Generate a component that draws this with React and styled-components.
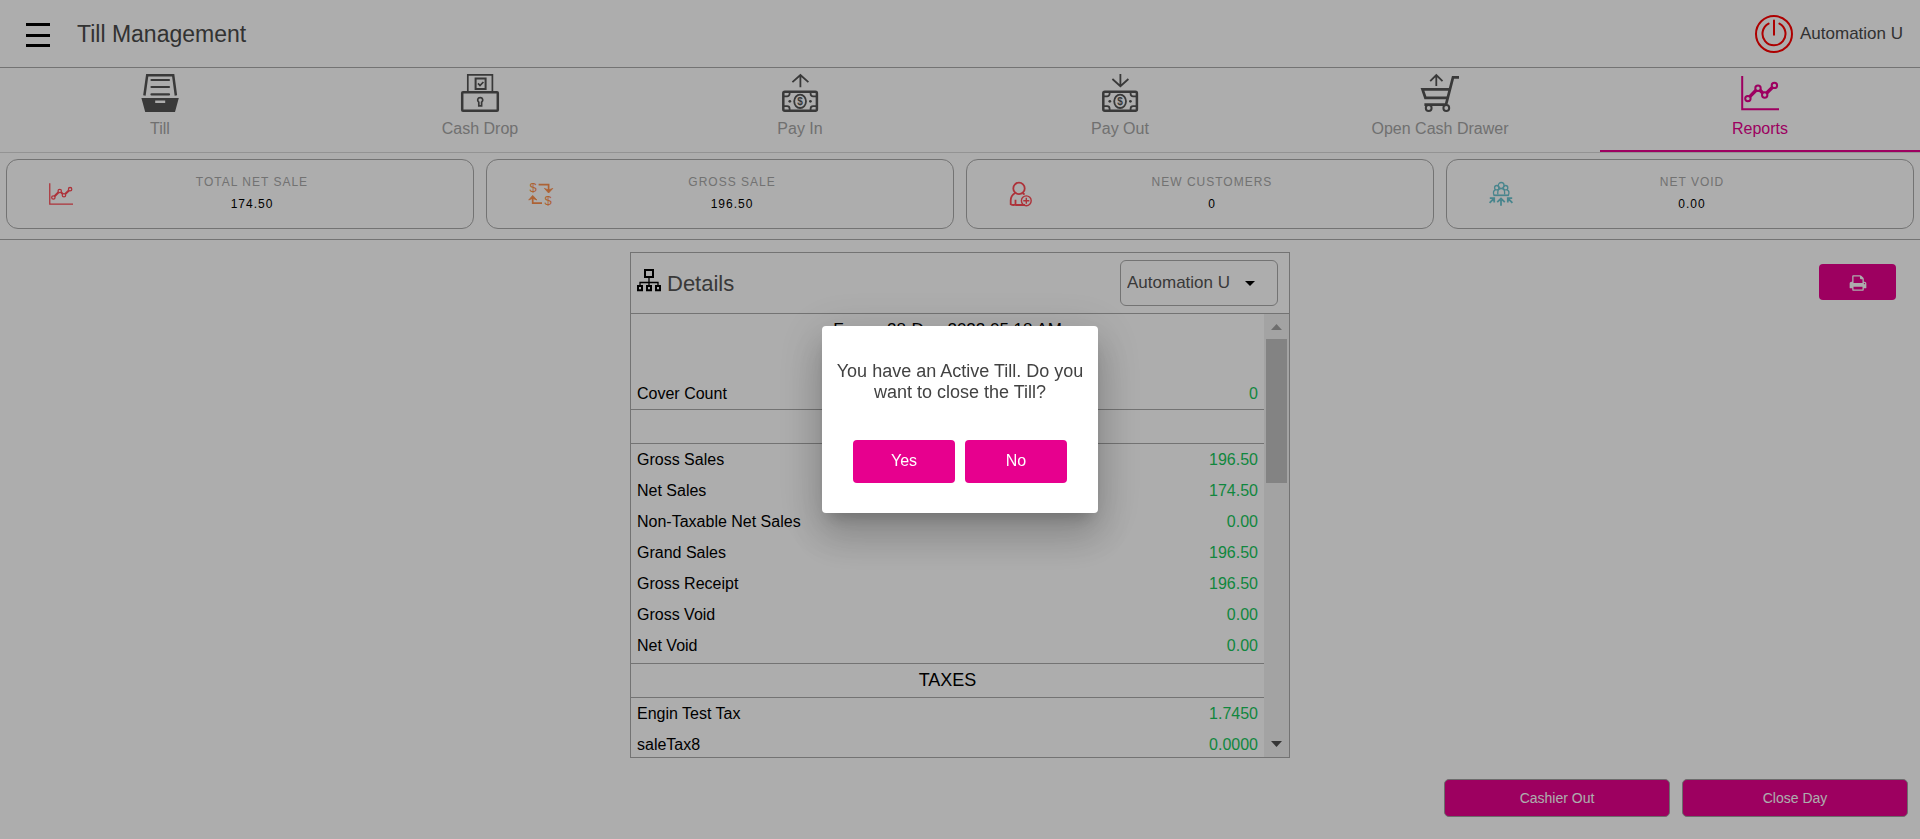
import React from "react";
import styled, { createGlobalStyle } from "styled-components";

const pink = "#e7008e";
const line = "#aaaaaa";

const GlobalStyle = createGlobalStyle`
  *, *::before, *::after { box-sizing: border-box; }
  body { margin: 0; background: #fff; color: #000; font-family: Arial, "Liberation Sans", sans-serif; font-size: 16px; }
  button, select { font-family: inherit; }
  h1, h2, h3, p, dl, dd, dt { margin: 0; font-weight: 400; }
`;

const Page = styled.div`
  display: flex;
  flex-direction: column;
  height: 100vh;
  min-height: 640px;
`;

const Header = styled.header`
  display: flex;
  align-items: center;
  height: 68px;
  padding: 0 17px 0 26px;
  border-bottom: 1px solid ${line};
`;

const MenuButton = styled.button`
  display: flex;
  padding: 0;
  margin-top: 2px;
  margin-right: 27px;
  border: 0;
  background: none;
`;

const Title = styled.h1`
  flex: 1;
  font-size: 23px;
  line-height: 28px;
  color: #4a4a4a;
`;

const UserButton = styled.button`
  display: flex;
  align-items: center;
  gap: 7px;
  padding: 0;
  border: 0;
  background: none;
  font-size: 17px;
  color: #4a4a4a;
`;

const Tabs = styled.nav`
  display: flex;
  border-bottom: 1px solid #d9d9d9;
`;

const Tab = styled.a`
  flex: 1;
  display: flex;
  flex-direction: column;
  align-items: center;
  gap: 7px;
  height: 84px;
  padding-top: 6px;
  text-decoration: none;
  line-height: 20px;
  color: ${(p) => (p.$active ? pink : "#a6a6a6")};
  border-bottom: 2px solid ${(p) => (p.$active ? pink : "transparent")};
  svg { color: ${(p) => (p.$active ? pink : "#555555")}; }
`;

const Cards = styled.section`
  display: grid;
  grid-template-columns: repeat(4, 1fr);
  gap: 12px;
  padding: 6px 6px 10px;
  border-bottom: 1px solid ${line};
`;

const Card = styled.article`
  display: grid;
  grid-template-columns: 108px 1fr 84px;
  align-items: center;
  height: 70px;
  border: 1px solid ${line};
  border-radius: 12px;
  text-align: center;
  font-size: 12px;
  line-height: 22px;
  letter-spacing: 1px;
`;

const CardText = styled.div`
  padding-bottom: 2px;
`;

const CardIcon = styled.span`
  display: flex;
  justify-content: center;
  letter-spacing: 0;
  color: ${(p) => p.$color};
`;

const CardLabel = styled.h2`
  font-size: 12px;
  font-weight: 500;
  color: #a8a8a8;
`;

const Main = styled.main`
  flex: 1;
  min-height: 0;
  display: grid;
  grid-template-columns: 1fr 660px 1fr;
  padding-top: 12px;
`;

const Panel = styled.section`
  grid-column: 2;
  display: flex;
  flex-direction: column;
  min-height: 0;
  border: 1px solid ${line};
`;

const PanelHeader = styled.div`
  display: flex;
  align-items: center;
  gap: 6px;
  height: 61px;
  padding: 0 11px 0 6px;
  border-bottom: 1px solid ${line};
`;

const PanelTitle = styled.h2`
  flex: 1;
  display: flex;
  align-items: center;
  gap: 6px;
  padding-top: 2px;
  font-size: 22px;
  line-height: 26px;
  color: #555555;
  svg { color: #000; margin-bottom: 8px; }
`;

const SelectBox = styled.label`
  position: relative;
  display: block;
  svg { position: absolute; right: 23px; top: 21px; pointer-events: none; }
`;

const Select = styled.select`
  appearance: none;
  width: 158px;
  height: 46px;
  padding: 0 6px 2px;
  border: 1px solid ${line};
  border-radius: 6px;
  background: none;
  font-size: 17px;
  color: #555555;
`;

const Scroller = styled.div`
  flex: 1;
  display: flex;
  min-height: 0;
`;

const Report = styled.div`
  flex: 1;
  overflow: hidden;
`;

const Period = styled.p`
  height: 64px;
  font-size: 17px;
  line-height: 32px;
  text-align: center;
`;

const Rows = styled.dl`
  padding-bottom: ${(p) => (p.$last ? 0 : 2)}px;
`;

const Row = styled.div`
  display: flex;
  justify-content: space-between;
  padding: 0 6px;
  line-height: 31px;
`;

const Amount = styled.dd`
  color: #18c75c;
`;

const Heading = styled.h3`
  height: 35px;
  border: solid ${line};
  border-width: 1px 0;
  font-size: 18px;
  line-height: 33px;
  text-align: center;
`;

const Track = styled.div`
  display: flex;
  flex-direction: column;
  align-items: center;
  justify-content: space-between;
  width: 25px;
  padding: 10px 0;
  background: #f1f1f1;
`;

const Thumb = styled.div`
  width: 21px;
  height: 144px;
  margin-top: 9px;
  margin-bottom: auto;
  background: #c1c1c1;
`;

const PrintButton = styled.button`
  justify-self: end;
  display: flex;
  align-items: center;
  justify-content: center;
  width: 77px;
  height: 36px;
  margin: 12px 24px 0 0;
  padding: 2px 0 0;
  border: 0;
  border-radius: 4px;
  background: ${pink};
  color: #fff;
`;

const Footer = styled.footer`
  display: flex;
  justify-content: flex-end;
  gap: 12px;
  padding: 21px 12px 22px;
`;

const ActionButton = styled.button`
  width: 226px;
  height: 38px;
  border: 1px solid #a0a0a0;
  border-radius: 5px;
  background: ${pink};
  font-size: 14px;
  font-weight: 500;
  color: #fff;
`;

const Backdrop = styled.div`
  position: fixed;
  inset: 0;
  display: flex;
  align-items: center;
  justify-content: center;
  background: rgba(0, 0, 0, 0.32);
`;

const Dialog = styled.div`
  width: 276px;
  padding: 35px 12px 30px;
  border-radius: 4px;
  background: #fff;
  text-align: center;
  box-shadow: 0 11px 15px -7px rgba(0, 0, 0, 0.2), 0 24px 38px 3px rgba(0, 0, 0, 0.14), 0 9px 46px 8px rgba(0, 0, 0, 0.12);
`;

const Message = styled.p`
  font-size: 18px;
  line-height: 21px;
  color: #424242;
`;

const DialogActions = styled.div`
  display: flex;
  justify-content: center;
  gap: 10px;
  padding-top: 37px;
`;

const DialogButton = styled.button`
  width: 102px;
  height: 43px;
  padding: 0 0 2px;
  border: 0;
  border-radius: 4px;
  background: ${pink};
  font-size: 16px;
  font-weight: 500;
  color: #fff;
`;

const Drawing = styled.svg`
  flex: none;
  overflow: visible;
`;

const Svg = ({ size = 38, box = size, width = 2, children }) => (
  <Drawing width={size} height={size} viewBox={`0 0 ${box} ${box}`} fill="none" stroke="currentColor" strokeWidth={width} aria-hidden="true">
    {children}
  </Drawing>
);

const TillIcon = () => (
  <Svg width={2.5}>
    <path d="M3.4 21.5 6.2 1.3h26l2.7 20.2" />
    <path d="M10.5 6h17.5M10.5 13h17.5M10.5 20.4h17.5" strokeWidth="2.2" strokeLinecap="round" />
    <path fillRule="evenodd" fill="currentColor" stroke="none" d="M.4 24h37.4l-3.8 14H4.2zM14.2 26.6v2.4h10v-2.4z" />
  </Svg>
);

const DropIcon = () => (
  <Svg>
    <path d="M6.8 18V.9h24.6V18" strokeWidth="1.7" />
    <path d="M14.6 4.6h10v10.5h-10z" strokeWidth="2" />
    <path d="m17 9.4 2 2.2 3.4-3.6" strokeWidth="1.7" />
    <rect x="1.2" y="18.3" width="35.6" height="18.5" rx=".8" strokeWidth="2.5" />
    <path d="M19.2 23.6a2.5 2.5 0 0 1 1.4 4.6v3.6h-2.8v-3.6a2.5 2.5 0 0 1 1.4-4.6z" strokeWidth="1.7" />
  </Svg>
);

const Bill = () => (
  <>
    <rect x="2.3" y="17.8" width="33.6" height="18.9" rx="1.5" strokeWidth="2.5" />
    <path d="M8.6 18v1.8a2.5 2.5 0 0 1-2.5 2.5H3M29.6 18v1.8a2.5 2.5 0 0 0 2.5 2.5H36M8.6 36.5v-1.8a2.5 2.5 0 0 0-2.5-2.5H3M29.6 36.5v-1.8a2.5 2.5 0 0 1 2.5-2.5H36" strokeWidth="1.8" />
    <ellipse cx="19.1" cy="27.3" rx="5.9" ry="6.7" strokeWidth="1.8" />
    <circle cx="8.8" cy="27.3" r="1.4" fill="currentColor" stroke="none" />
    <circle cx="29.4" cy="27.3" r="1.4" fill="currentColor" stroke="none" />
    <text x="19.1" y="31" fontSize="10" fontWeight="700" textAnchor="middle" fill="currentColor" stroke="none">$</text>
  </>
);

const PayInIcon = () => (
  <Svg>
    <path d="M11.4 8.2 19.4 1l8 7.2M19.4 1v12.2" strokeWidth="1.8" />
    <Bill />
  </Svg>
);

const PayOutIcon = () => (
  <Svg>
    <path d="m11.4 5 8 7.2 8-7.2M19.4 12.2V0" strokeWidth="1.8" />
    <Bill />
  </Svg>
);

const CartIcon = () => (
  <Svg width={2.7}>
    <path d="M38 3.4h-6l-7 27.2H3.4" />
    <path d="M30 15.4H1.5l2.9 8.4h22" />
    <circle cx="7.7" cy="34" r="2.9" strokeWidth="2" />
    <circle cx="25.3" cy="34" r="2.9" strokeWidth="2" />
    <path d="M9.2 7.2 15.3 1l6.2 6.2M15.3 1v11" strokeWidth="1.8" />
  </Svg>
);

const ChartIcon = ({ size, width = 2 }) => (
  <Svg size={size} box={38} width={width}>
    <path d="M1.2 2v33.2H38" />
    <path d="M8.8 22.6l6.3-6.4M18.8 16l3 3.2M25.7 19l5.8-5.7" strokeWidth={3.4} />
    <circle cx="6.9" cy="24.6" r="2.7" />
    <circle cx="17" cy="14.2" r="2.7" />
    <circle cx="23.7" cy="21" r="2.7" />
    <circle cx="33.4" cy="11.4" r="2.7" />
  </Svg>
);

const ExchangeIcon = () => (
  <Svg size={24} width={1.7}>
    <text x="4" y="10" fontSize="13" textAnchor="middle" fill="currentColor" stroke="none">$</text>
    <text x="19" y="22.5" fontSize="13" textAnchor="middle" fill="currentColor" stroke="none">$</text>
    <path d="M9.6 2.6h10v6.4M13 21.2H3.7v-6" />
    <path d="M15.4 6.4l4.2 1.6 4.2-1.6-4.2 4.6zM-.3 18l4-1.6 4.2 1.6-4.2-4.6z" fill="currentColor" strokeWidth=".8" />
  </Svg>
);

const CustomerIcon = () => (
  <Svg size={24} width={1.8}>
    <circle cx="10" cy="6.4" r="5.7" />
    <path d="M6.2 11C3.6 12.5 1.7 15 1.7 18.5v3.7c1.5.9 3.2 1 4.8.5v-4.9M6.5 23h9.5M13.6 11.2l2 1.4" />
    <circle cx="17.3" cy="18.8" r="4.9" strokeWidth="1.4" />
    <path d="M17.3 15.8v6M14.3 18.8h6" strokeWidth="1.4" />
  </Svg>
);

const GroupIcon = () => (
  <Svg size={24} width={1.3}>
    <circle cx="12.2" cy="3.4" r="2.9" />
    <circle cx="7.8" cy="5.7" r="2.2" />
    <circle cx="16.6" cy="5.7" r="2.2" />
    <path d="M5 13.2c-1-2.6-.4-4.6 1.2-5.4M19.4 13.2c1-2.6.4-4.6-1.2-5.4M8.8 12.5V10a3.4 3.4 0 0 1 6.8 0v2.5" />
    <path d="M4.5 13.3h15.4" strokeWidth="1.7" />
    <path d="m8.2 20.2 3.8-3.6 3.8 3.6M12 16.8v7M.8 16.2h4.4v4.4M5 16.4.6 20.8M23.2 16.2h-4.4v4.4M19 16.4l4.4 4.4" strokeWidth="1.8" />
  </Svg>
);

const SitemapIcon = () => (
  <Svg size={24} width={2}>
    <path d="M8 2h8v7H8zM1 18h4v4.2H1zM10 18h4v4.2h-4zM19 18h4v4.2h-4z" />
    <path d="M12 9v9M3 18v-3.5h18V18" strokeWidth="1.3" />
  </Svg>
);

const PowerIcon = () => (
  <Svg>
    <circle cx="19" cy="19" r="18" />
    <path d="M13.6 8.6a11.5 11.5 0 1 0 10.8 0M19 5.5v14.2" strokeLinecap="round" />
  </Svg>
);

const PrintIcon = () => (
  <svg width="18" height="18" viewBox="0 0 1792 1792" fill="currentColor" aria-hidden="true">
    <path d="M448 1536h896v-256h-896v256zm0-640h896v-384h-160q-40 0-68-28t-28-68v-160h-640v640zm1152 64q0-26-19-45t-45-19-45 19-19 45 19 45 45 19 45-19 19-45zm128 0v416q0 13-9.5 22.5t-22.5 9.5h-224v160q0 40-28 68t-68 28h-960q-40 0-68-28t-28-68v-160h-224q-13 0-22.5-9.5t-9.5-22.5v-416q0-79 56.5-135.5t135.5-56.5h64v-544q0-40 28-68t68-28h672q40 0 88 20t76 48l152 152q28 28 48 76t20 88v256h64q79 0 135.5 56.5t56.5 135.5z" />
  </svg>
);

const tabs = [
  { label: "Till", icon: <TillIcon /> },
  { label: "Cash Drop", icon: <DropIcon /> },
  { label: "Pay In", icon: <PayInIcon /> },
  { label: "Pay Out", icon: <PayOutIcon /> },
  { label: "Open Cash Drawer", icon: <CartIcon /> },
  { label: "Reports", icon: <ChartIcon size={38} />, active: true },
];

const cards = [
  { label: "TOTAL NET SALE", value: "174.50", color: "#ff4a55", icon: <ChartIcon size={24} /> },
  { label: "GROSS SALE", value: "196.50", color: "#ff914d", icon: <ExchangeIcon /> },
  { label: "NEW CUSTOMERS", value: "0", color: "#ff4a55", icon: <CustomerIcon /> },
  { label: "NET VOID", value: "0.00", color: "#6cc5d0", icon: <GroupIcon /> },
];

const sales = [
  ["Gross Sales", "196.50"],
  ["Net Sales", "174.50"],
  ["Non-Taxable Net Sales", "0.00"],
  ["Grand Sales", "196.50"],
  ["Gross Receipt", "196.50"],
  ["Gross Void", "0.00"],
  ["Net Void", "0.00"],
];

const taxes = [
  ["Engin Test Tax", "1.7450"],
  ["saleTax8", "0.0000"],
];

const RowList = ({ rows, last }) => (
  <Rows $last={last}>
    {rows.map(([label, value]) => (
      <Row key={label}>
        <dt>{label}</dt>
        <Amount>{value}</Amount>
      </Row>
    ))}
  </Rows>
);

export default function App() {
  return (
    <>
      <GlobalStyle />
      <Page>
        <Header>
          <MenuButton aria-label="Menu">
            <svg width="24" height="24" fill="currentColor" aria-hidden="true">
              <path d="M0 0h24v3H0zM0 11h24v3H0zM0 21h24v3H0z" />
            </svg>
          </MenuButton>
          <Title>Till Management</Title>
          <UserButton>
            <CardIcon $color="#ff0000"><PowerIcon /></CardIcon>
            Automation U
          </UserButton>
        </Header>
        <Tabs>
          {tabs.map((t) => (
            <Tab key={t.label} href="#" $active={t.active}>
              {t.icon}
              {t.label}
            </Tab>
          ))}
        </Tabs>
        <Cards>
          {cards.map((c) => (
            <Card key={c.label}>
              <CardIcon $color={c.color}>{c.icon}</CardIcon>
              <CardText>
                <CardLabel>{c.label}</CardLabel>
                <p>{c.value}</p>
              </CardText>
            </Card>
          ))}
        </Cards>
        <Main>
          <Panel>
            <PanelHeader>
              <PanelTitle><SitemapIcon />Details</PanelTitle>
              <SelectBox>
                <Select aria-label="Cashier"><option>Automation U</option></Select>
                <svg width="10" height="5" aria-hidden="true"><path d="M0 0h10L5 5z" /></svg>
              </SelectBox>
            </PanelHeader>
            <Scroller>
              <Report>
                <Period>From : 28-Dec-2022 05:18 AM</Period>
                <RowList rows={[["Cover Count", "0"]]} last />
                <Heading />
                <RowList rows={sales} />
                <Heading>TAXES</Heading>
                <RowList rows={taxes} last />
              </Report>
              <Track>
                <svg width="11" height="6" fill="#a3a3a3" aria-hidden="true"><path d="M0 6h11L5.5 0z" /></svg>
                <Thumb />
                <svg width="11" height="6" fill="#505050" aria-hidden="true"><path d="M0 0h11L5.5 6z" /></svg>
              </Track>
            </Scroller>
          </Panel>
          <PrintButton aria-label="Print"><PrintIcon /></PrintButton>
        </Main>
        <Footer>
          <ActionButton>Cashier Out</ActionButton>
          <ActionButton>Close Day</ActionButton>
        </Footer>
      </Page>
      <Backdrop>
        <Dialog role="dialog" aria-modal="true" aria-labelledby="close-till-message">
          <Message id="close-till-message">You have an Active Till. Do you want to close the Till?</Message>
          <DialogActions>
            <DialogButton>Yes</DialogButton>
            <DialogButton>No</DialogButton>
          </DialogActions>
        </Dialog>
      </Backdrop>
    </>
  );
}
